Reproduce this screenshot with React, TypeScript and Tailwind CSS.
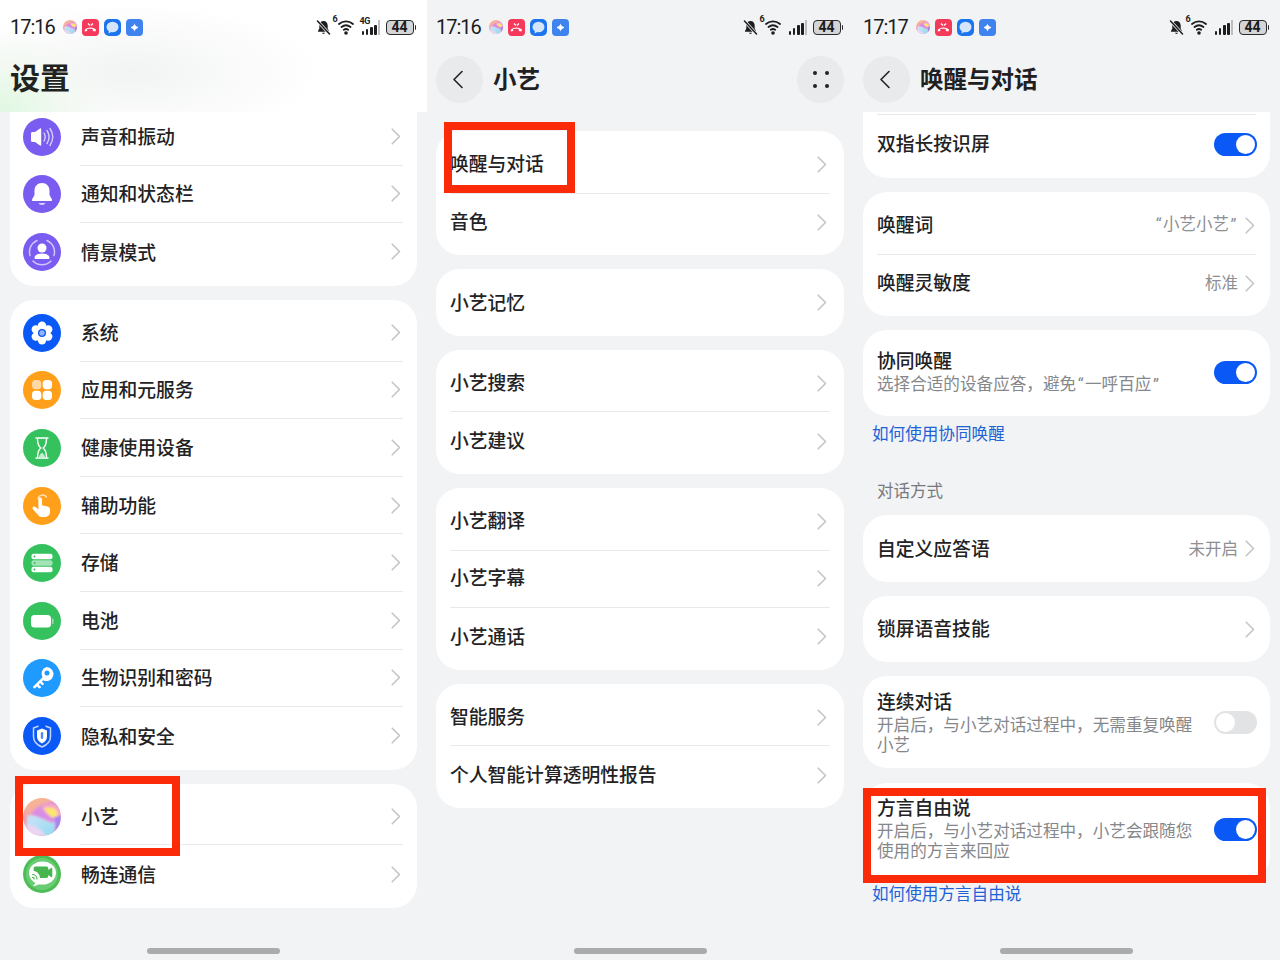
import type { ReactNode } from "react";

const CJK = "font-['Noto_Sans_CJK_SC','Noto_Sans',sans-serif]";

function Chevron() {
  return (
    <svg width="10" height="17" viewBox="0 0 10 17" fill="none" className="shrink-0">
      <path d="M1.200 1.200 8.500 8.500 1.200 15.800" stroke="#c3c5c8" strokeWidth="1.600" strokeLinecap="round" strokeLinejoin="round" />
    </svg>
  );
}

function Toggle({ on = true, className = "" }: { on?: boolean; className?: string }) {
  return (
    <div className={`flex h-[23px] w-[43px] shrink-0 items-center rounded-full px-[2px] ${on ? "justify-end bg-[#0a59f7]" : "justify-start bg-[#e2e3e5]"} ${className}`}>
      <div className="h-[19px] w-[19px] rounded-full bg-white" />
    </div>
  );
}

function Circle({ bg, children }: { bg: string; children: ReactNode }) {
  return (
    <svg width="38" height="38" viewBox="0 0 38 38" className="shrink-0">
      <circle cx="19" cy="19" r="19" fill={bg} />
      {children}
    </svg>
  );
}

const SoundIcon = (
  <Circle bg="#7a5cf0">
    <path d="M8 15.500c0-.8.6-1.500 1.500-1.500h2.500l5-3.500c.6-.4 1.200 0 1.200.6v15.800c0 .6-.6 1-1.200.6l-5-3.500H9.500c-.9 0-1.500-.7-1.500-1.500z" fill="#fff" />
    <path d="M21 15c1.500 2.500 1.500 5.500 0 8M24 12.500c2.600 4 2.600 9 0 13M27 10.500c3.400 5.200 3.400 11.800 0 17" stroke="#fff" strokeOpacity=".7" strokeWidth="1.400" fill="none" strokeLinecap="round" />
  </Circle>
);
const BellIcon = (
  <Circle bg="#7a5cf0">
    <path d="M19 8c-4.500 0-7.500 3.400-7.500 7.500v4.500L9 24.500c-.4.8.1 1.500 1 1.500h18c.9 0 1.400-.7 1-1.500L26.500 20v-4.500C26.500 11.400 23.500 8 19 8z" fill="#fff" />
    <path d="M15.500 28h7c-.6 1.300-2 2-3.500 2s-2.900-.7-3.500-2z" fill="#fff" fillOpacity=".75" />
  </Circle>
);
const SceneIcon = (
  <Circle bg="#7a5cf0">
    <path d="M7 22.500a12.500 12.500 0 0 1 7-15M24 7.500a12.500 12.500 0 0 1 7 15M28 28a12.500 12.500 0 0 1-18 0" stroke="#fff" strokeOpacity=".65" strokeWidth="1.500" fill="none" strokeLinecap="round" />
    <circle cx="19" cy="15" r="4.500" fill="#fff" />
    <path d="M11.500 25c0-3 3.400-4.500 7.500-4.500s7.500 1.500 7.500 4.500c0 .7-.5 1-1 1h-13c-.5 0-1-.3-1-1z" fill="#fff" />
  </Circle>
);
const GearIcon = (
  <Circle bg="#0a59f7">
    <g fill="#fff">
      <circle cx="19" cy="11.800" r="4.200" />
      <circle cx="25.200" cy="15.400" r="4.200" />
      <circle cx="25.200" cy="22.600" r="4.200" />
      <circle cx="19" cy="26.200" r="4.200" />
      <circle cx="12.800" cy="22.600" r="4.200" />
      <circle cx="12.800" cy="15.400" r="4.200" />
      <circle cx="19" cy="19" r="7" />
    </g>
    <circle cx="19" cy="19" r="4" fill="#0a59f7" />
    <circle cx="19" cy="19" r="2.700" fill="#8fb4fa" />
  </Circle>
);
const AppsIcon = (
  <Circle bg="#ff9f1a">
    <rect x="9" y="9" width="9.300" height="9.300" rx="3.500" fill="#fff" fillOpacity=".6" />
    <rect x="19.700" y="9" width="9.300" height="9.300" rx="3.500" fill="#fff" />
    <rect x="9" y="19.700" width="9.300" height="9.300" rx="3.500" fill="#fff" />
    <rect x="19.700" y="19.700" width="9.300" height="9.300" rx="3.500" fill="#fff" />
  </Circle>
);
const HourglassIcon = (
  <Circle bg="#35c25e">
    <path d="M13 9h12M13 29h12" stroke="#fff" strokeWidth="1.400" strokeLinecap="round" />
    <path d="M14.500 9.500c0 5 .8 7.500 3.300 9.500-2.500 2-3.300 4.500-3.300 9.500M23.500 9.500c0 5-.8 7.500-3.300 9.500 2.500 2 3.300 4.500 3.300 9.500" stroke="#fff" strokeWidth="1.400" fill="none" />
    <path d="M16 28c.5-2.300 1.700-3.500 3-4.200 1.300.7 2.500 1.900 3 4.200z" fill="#fff" fillOpacity=".7" />
  </Circle>
);
const HandIcon = (
  <Circle bg="#ff9f1a">
    <path d="M15 11.500a4.800 4.800 0 0 1 8.500-1.500" stroke="#fff" strokeOpacity=".7" strokeWidth="1.400" fill="none" strokeLinecap="round" />
    <path d="M17.200 10.500c1 0 1.800.8 1.800 1.800v6l5.500 1.100c1.500.3 2.500 1.500 2.500 3v2.600c0 3-2.400 5-5.400 5h-2.200c-2 0-3.400-.8-4.500-2.300l-5-5.400c-.7-.8-.5-1.900.3-2.500.7-.5 1.600-.4 2.300.2l2.900 2.500v-10.200c0-1 .8-1.800 1.800-1.800z" fill="#fff" />
  </Circle>
);
const StorageIcon = (
  <Circle bg="#35c25e">
    <rect x="8.500" y="9.800" width="21" height="5.400" rx="2" fill="#fff" />
    <rect x="8.500" y="16.300" width="21" height="5.400" rx="2" fill="#fff" fillOpacity=".55" />
    <rect x="8.500" y="22.800" width="21" height="5.400" rx="2" fill="#fff" />
    <circle cx="11.500" cy="12.500" r="1" fill="#35c25e" />
    <circle cx="11.500" cy="19" r="1" fill="#35c25e" />
    <circle cx="11.500" cy="25.500" r="1" fill="#35c25e" />
  </Circle>
);
const BatteryIcon = (
  <Circle bg="#35c25e">
    <rect x="8" y="13" width="20" height="12.500" rx="3.500" fill="#fff" />
    <rect x="29" y="16.500" width="1.500" height="5.500" rx=".7" fill="#fff" fillOpacity=".5" />
  </Circle>
);
const KeyIcon = (
  <Circle bg="#1f9bff">
    <path fillRule="evenodd" d="M23.500 8a7 7 0 1 1-3.300 13.200l-1.300 1.300 1.500 1.500c.5.500.5 1.300 0 1.800s-1.300.5-1.800 0l-1.500-1.500-1.300 1.300 1.700 1.700c.5.500.5 1.300 0 1.800s-1.300.5-1.800 0l-1.700-1.700-1.700 1.700c-.5.500-1.300.5-1.800 0s-.5-1.300 0-1.800l9-9A7 7 0 0 1 23.500 8zm.5 3.500a2.500 2.500 0 1 0 0 5 2.500 2.500 0 0 0 0-5z" fill="#fff" />
  </Circle>
);
const ShieldIcon = (
  <Circle bg="#0a59f7">
    <path d="M15 9.200 10.500 11v8.500c0 5 3.500 8.500 8.500 10.500 5-2 8.500-5.500 8.500-10.500V11L23 9.200" fill="none" stroke="#fff" strokeOpacity=".75" strokeWidth="1.500" strokeLinecap="round" />
    <path d="M14 13.500 19 11.500l5 2v6c0 3.400-2.200 5.700-5 7-2.800-1.300-5-3.600-5-7z" fill="#fff" />
    <rect x="17.800" y="15" width="2.400" height="7" rx="1.200" fill="#0a59f7" fillOpacity=".7" />
  </Circle>
);
function XiaoyiBall({ size, id }: { size: number; id: string }) {
  return (
    <svg width={size} height={size} viewBox="0 0 38 38" className="shrink-0">
      <defs>
        <clipPath id={id}><circle cx="19" cy="19" r="19" /></clipPath>
        <filter id={`${id}f`} x="-20%" y="-20%" width="140%" height="140%"><feGaussianBlur stdDeviation=".8" /></filter>
        <linearGradient id={`${id}a`} x1="0" y1="0" x2="0.4" y2="1">
          <stop offset="0" stopColor="#f8c07e" />
          <stop offset=".5" stopColor="#f3a2b4" />
          <stop offset="1" stopColor="#e9a9d8" />
        </linearGradient>
        <linearGradient id={`${id}b`} x1="0" y1="0" x2="1" y2="1">
          <stop offset="0" stopColor="#cfe2f8" />
          <stop offset="1" stopColor="#8fdcf0" />
        </linearGradient>
      </defs>
      <g clipPath={`url(#${id})`}>
        <rect width="38" height="38" fill={`url(#${id}a)`} />
        <g filter={`url(#${id}f)`}>
          <path d="M8 17C12 10 20 5 30 4l8 4v20L28 24C22 21 14 18 8 17z" fill="#d98ee6" />
          <path d="M18 9c4-3 10-4 15-2l5 5v10c-8 1-15-6-20-13z" fill="#f6a9c4" />
          <path d="M21 11c3-2 9-2 12 1 2 2 2 6 1 8-5 0-10-4-13-9z" fill="#fde56f" />
          <path d="M31 19c2 0 4-1 7-2v12l-7 6c2-5 2-11 0-16z" fill="#a484ee" />
          <path d="M5 17c8 0 15 4 21 7 2 1 4 1 5.500 0 .5 6-.5 11-3.500 14H8C3 32 3 24 5 17z" fill={`url(#${id}b)`} />
          <path d="M3 27c6-1 14 2 20 11H6z" fill="#e8d6f2" />
        </g>
      </g>
    </svg>
  );
}
const ChatIcon = (
  <Circle bg="#4dbd55">
    <circle cx="19" cy="19" r="16" fill="#6acc73" />
    <ellipse cx="19.500" cy="18" rx="13.500" ry="11.500" fill="#fff" />
    <path d="M12.500 26c0 2-1 4-3 5 3.500 0 7-1.500 8.500-4z" fill="#fff" />
    <path d="M14.500 11.500h9c1 0 1.800.8 1.800 1.800v1.700l2.800-2c.5-.3 1.200 0 1.200.6v7.800c0 .6-.7 1-1.200.6l-2.800-2v1.100c0 1-.8 1.800-1.800 1.800h-6.500c0-3.500-2.500-6.500-6.300-7v-2.600c0-1 .8-1.800 1.800-1.800z" fill="#47b650" />
    <path d="M9.500 19.500c2.500 0 4.500 2 4.500 4.500M9.500 22.300c1 0 1.700.7 1.700 1.700" stroke="#47b650" strokeWidth="1.200" fill="none" strokeLinecap="round" />
  </Circle>
);

function BellOff() {
  return (
    <svg width="15" height="15" viewBox="0 0 15 15" className="shrink-0">
      <path d="M7.500 1C5 1 3.300 3 3.300 5.500v3L2 11c-.2.400 0 .8.500.8h10c.5 0 .7-.4.500-.8l-1.300-2.500v-3C11.700 3 10 1 7.500 1z" fill="#1d1d1f" />
      <path d="M6 12.800h3c-.2.700-.8 1.200-1.500 1.200S6.200 13.500 6 12.800z" fill="#1d1d1f" />
      <path d="M1.500 1 13.500 14" stroke="#f1f3f5" strokeWidth="3" />
      <path d="M1.500 1 13.500 14" stroke="#1d1d1f" strokeWidth="1.500" strokeLinecap="round" />
    </svg>
  );
}

function WifiSix() {
  return (
    <div className="relative h-[16px] w-[20px] shrink-0">
      <svg width="20" height="16" viewBox="0 0 20 16" className="absolute left-0 top-0">
        <path d="M3 5C7.200 1.500 12.800 1.500 17 5M5.500 8c2.800-2.200 6.200-2.200 9 0M7.800 10.800c1.500-1 2.900-1 4.400 0" stroke="#1d1d1f" strokeWidth="1.900" fill="none" strokeLinecap="round" />
        <circle cx="10" cy="14" r="1.800" fill="#1d1d1f" />
      </svg>
      <span className="absolute -left-[3px] -top-[4px] font-['Roboto',sans-serif] text-[9px] font-bold leading-none text-[#1d1d1f]">6</span>
    </div>
  );
}

function Signal({ fourG = false }: { fourG?: boolean }) {
  const heights = fourG ? [4, 6, 8, 10] : [4, 7, 10, 12];
  return (
    <div className="relative flex h-[15px] w-[19px] shrink-0 items-end gap-[1.500px] pl-[1px]">
      {fourG ? <span className="absolute -left-[1px] -top-[3px] font-['Roboto',sans-serif] text-[9px] font-bold leading-none tracking-[-0.5px] text-[#1d1d1f]">4G</span> : null}
      {heights.map((h) => (
        <div key={h} className="w-[3px] rounded-[1px] bg-[#1d1d1f]" style={{ height: h }} />
      ))}
      <div className="h-[15px] w-[1.500px] bg-[#bcbec0]" />
    </div>
  );
}

function StatusBar({ time, fourG, pl = 10 }: { time: string; fourG?: boolean; pl?: number }) {
  return (
    <div className="flex h-[54px] items-center pr-[11px]" style={{ paddingLeft: pl }}>
      <span className="font-['Roboto',sans-serif] text-[20px] leading-none tracking-[-1px] text-[#1b1b1d]">{time}</span>
      <div className="ml-[8px] flex items-center gap-[5px]">
        <XiaoyiBall size={14} id={`s${time}${pl}`} />
        <svg width="17" height="17" viewBox="0 0 17 17" className="shrink-0">
          <rect width="17" height="17" rx="4" fill="#f5395a" />
          <path d="M3 10.500c3-2.800 8-2.800 11 0l-.6 2-2.600-.6V10c-1.700-.5-3.900-.5-5.600 0v1.900l-2.600.6z" fill="#fff" />
          <path d="M6 4.500l2 2M11 4.500l-2 2" stroke="#fff" strokeWidth="1.200" />
        </svg>
        <svg width="17" height="17" viewBox="0 0 17 17" className="shrink-0">
          <rect width="17" height="17" rx="5" fill="#1b74f0" />
          <ellipse cx="8.500" cy="8" rx="6" ry="5.300" fill="#d5e6fb" />
          <path d="M5 11.500 4.500 14.500 8 12.500z" fill="#d5e6fb" />
        </svg>
        <svg width="17" height="17" viewBox="0 0 17 17" className="shrink-0">
          <rect width="17" height="17" rx="4" fill="#3e83ee" />
          <path d="M8.500 4.500c.5 2 1.500 3 3.500 3.500v1c-2 .5-3 1.500-3.500 3.500-.5-2-1.500-3-3.500-3.500V8c2-.5 3-1.500 3.500-3.500z" fill="#fff" />
        </svg>
      </div>
      <div className="ml-auto flex items-center gap-[5px]">
        <BellOff />
        <WifiSix />
        <Signal fourG={fourG} />
        <div className="ml-[1px] flex items-center gap-[1px]">
          <div className="flex h-[15px] w-[28px] items-center justify-center rounded-[4px] border-[1.500px] border-[#2a2a2c] bg-[#d4d5d7]">
            <span className="font-['Roboto',sans-serif] text-[14px] font-bold leading-none text-[#1b1b1d]">44</span>
          </div>
          <div className="h-[5px] w-[1.500px] rounded-r bg-[#2a2a2c]" />
        </div>
      </div>
    </div>
  );
}

function NavBar({ title, dots }: { title: string; dots?: boolean }) {
  return (
    <div className="flex h-[50px] items-center pl-[9px] pr-[10px]">
      <div className="flex h-[47px] w-[47px] items-center justify-center rounded-full bg-[#e8eaec]">
        <svg width="12" height="19" viewBox="0 0 12 19" fill="none" className="-ml-[3px]">
          <path d="M10 1.500 2 9.500 10 17.500" stroke="#222" strokeWidth="1.600" strokeLinecap="round" strokeLinejoin="round" />
        </svg>
      </div>
      <span className="ml-[10px] text-[23.500px] font-bold leading-none text-[#202022]">{title}</span>
      {dots ? (
        <div className="ml-auto grid h-[47px] w-[47px] grid-cols-2 place-content-center gap-x-[9px] gap-y-[9px] rounded-full bg-[#e8eaec] px-[15.500px]">
          <div className="h-[4px] w-[4px] rounded-full bg-[#222]" />
          <div className="h-[4px] w-[4px] rounded-full bg-[#222]" />
          <div className="h-[4px] w-[4px] rounded-full bg-[#222]" />
          <div className="h-[4px] w-[4px] rounded-full bg-[#222]" />
        </div>
      ) : null}
    </div>
  );
}

function IconRow({ icon, label, last }: { icon: ReactNode; label: string; last?: boolean }) {
  return (
    <div className="flex h-[57.600px] items-center pl-[13px] pr-[14px]">
      {icon}
      <div className={`ml-[19px] flex h-full flex-1 items-center pl-[1px] pr-[2px] ${last ? "" : "border-b border-[#e7e9eb]"}`}>
        <span className="flex-1 text-[18.800px] font-medium leading-none text-[#222224]">{label}</span>
        <Chevron />
      </div>
    </div>
  );
}

function TextRow({ label, value, last, edge = "pr-[3px]" }: { label: string; value?: ReactNode; last?: boolean; edge?: string }) {
  return (
    <div className="px-[14px]">
      <div className={`flex h-[57.600px] items-center ${edge} ${last ? "" : "border-b border-[#e7e9eb]"}`}>
        <span className="mb-[2px] flex-1 text-[18.800px] font-medium leading-none text-[#222224]">{label}</span>
        {value ? <span className="mb-[2px] mr-[7px] text-[16.500px] leading-none text-[#8d8f92]">{value}</span> : null}
        <Chevron />
      </div>
    </div>
  );
}

function Card({ children, className = "" }: { children: ReactNode; className?: string }) {
  return <div className={`rounded-[24px] bg-white pb-[4px] pt-[5px] ${className}`}>{children}</div>;
}

function IconCard({ children }: { children: ReactNode }) {
  return <div className="mt-[14px] rounded-[24px] bg-white pb-[5px] pt-[4px]">{children}</div>;
}

function Quote({ mark }: { mark: string }) {
  return <span className="px-[1.500px] font-['Roboto',sans-serif]">{mark}</span>;
}

function TwoLine({ title, sub, on, className, toggleClass }: { title: string; sub: ReactNode[]; on: boolean; className: string; toggleClass?: string }) {
  return (
    <div className={`flex items-center rounded-[24px] bg-white pl-[14px] pr-[13px] ${className}`}>
      <div className="w-[322px]">
        <div className="text-[18.800px] font-medium leading-[24px] text-[#222224]">{title}</div>
        <div className="mt-[1px] text-[16.600px] leading-[20px] text-[#85878a]">
          {sub.map((s, i) => (
            <div key={i}>{s}</div>
          ))}
        </div>
      </div>
      <Toggle on={on} className={`ml-auto ${toggleClass ?? ""}`} />
    </div>
  );
}

function HomeBar({ className = "left-[147px]" }: { className?: string }) {
  return <div className={`absolute bottom-[6px] h-[6px] w-[133px] rounded-full bg-[#a9abad] ${className}`} />;
}

function RedBox({ className }: { className: string }) {
  return <div className={`absolute border-[8px] border-[#fb2a08] ${className}`} />;
}

function SettingsColumn() {
  return (
    <div className="relative h-[960px] w-[427px] overflow-hidden">
      <div className="h-[112px] bg-white bg-[radial-gradient(ellipse_110px_80px_at_0px_112px,#dff8e2_0%,#f3f9f2_60%,transparent_100%),radial-gradient(ellipse_190px_70px_at_130px_72px,#f2f3f3_0%,transparent_100%)]">
        <StatusBar time="17:16" fourG />
        <div className="-mt-[3px] flex h-[50px] items-center pl-[10px]">
          <span className="text-[30px] font-bold leading-none text-[#1f2421]">设置</span>
        </div>
      </div>
      <div className="h-[848px] overflow-hidden px-[10px]">
        <div className="-mt-[24px] rounded-[24px] bg-white pb-[5.200px] pt-[20px]">
          <IconRow icon={SoundIcon} label="声音和振动" />
          <IconRow icon={BellIcon} label="通知和状态栏" />
          <IconRow icon={SceneIcon} label="情景模式" last />
        </div>
        <IconCard>
          <IconRow icon={GearIcon} label="系统" />
          <IconRow icon={AppsIcon} label="应用和元服务" />
          <IconRow icon={HourglassIcon} label="健康使用设备" />
          <IconRow icon={HandIcon} label="辅助功能" />
          <IconRow icon={StorageIcon} label="存储" />
          <IconRow icon={BatteryIcon} label="电池" />
          <IconRow icon={KeyIcon} label="生物识别和密码" />
          <IconRow icon={ShieldIcon} label="隐私和安全" last />
        </IconCard>
        <IconCard>
          <IconRow icon={<XiaoyiBall size={38} id="xy" />} label="小艺" />
          <IconRow icon={ChatIcon} label="畅连通信" last />
        </IconCard>
      </div>
      <RedBox className="left-[15px] top-[776px] h-[80px] w-[165px]" />
      <HomeBar />
    </div>
  );
}

function XiaoyiColumn() {
  return (
    <div className="relative h-[960px] w-[427px] overflow-hidden">
      <StatusBar time="17:16" pl={9} />
      <NavBar title="小艺" dots />
      <div className="mt-[27px] flex flex-col gap-[14px] pl-[9px] pr-[10px]">
        <Card>
          <TextRow label="唤醒与对话" />
          <TextRow label="音色" last />
        </Card>
        <Card>
          <TextRow label="小艺记忆" last />
        </Card>
        <Card>
          <TextRow label="小艺搜索" />
          <TextRow label="小艺建议" last />
        </Card>
        <Card>
          <TextRow label="小艺翻译" />
          <TextRow label="小艺字幕" />
          <TextRow label="小艺通话" last />
        </Card>
        <Card>
          <TextRow label="智能服务" />
          <TextRow label="个人智能计算透明性报告" last />
        </Card>
      </div>
      <RedBox className="left-[17px] top-[122px] h-[71px] w-[131px]" />
      <HomeBar />
    </div>
  );
}

function WakeColumn() {
  return (
    <div className="relative h-[960px] w-[426px] overflow-hidden">
      <StatusBar time="17:17" pl={9} />
      <NavBar title="唤醒与对话" />
      <div className="mt-[8px] h-[848px] overflow-hidden pl-[9px] pr-[10px]">
        <div className="-mt-[24px] rounded-[24px] bg-white pb-[5px]">
          <div className="mx-[14px] h-[27px] border-b border-[#e7e9eb]" />
          <div className="flex h-[58px] items-center pl-[14px] pr-[13px]">
            <span className="-mt-[2px] flex-1 text-[18.800px] font-medium leading-none text-[#222224]">双指长按识屏</span>
            <Toggle />
          </div>
        </div>
        <Card className="mt-[14px]">
          <TextRow edge="pr-[1px]" label="唤醒词" value={<><Quote mark="“" />小艺小艺<Quote mark="”" /></>} />
          <TextRow edge="pr-[1px]" label="唤醒灵敏度" value="标准" last />
        </Card>
        <TwoLine className="mt-[14px] h-[86px] pb-[4px]" title="协同唤醒" sub={[<>选择合适的设备应答，避免<Quote mark="“" />一呼百应<Quote mark="”" /></>]} on toggleClass="mt-[2px]" />
        <div className="ml-[9px] mt-[6px] text-[16.600px] leading-[22px] text-[#1e62d6]">如何使用协同唤醒</div>
        <div className="ml-[14px] mt-[35px] text-[16.500px] leading-[22px] text-[#77797c]">对话方式</div>
        <Card className="mt-[14px]">
          <TextRow edge="pr-[1px]" label="自定义应答语" value="未开启" last />
        </Card>
        <Card className="mt-[14px]">
          <TextRow edge="pr-[1px]" label="锁屏语音技能" last />
        </Card>
        <TwoLine className="mt-[14px] h-[92px] pb-[2px]" title="连续对话" sub={["开启后，与小艺对话过程中，无需重复唤醒", "小艺"]} on={false} toggleClass="mt-[2px]" />
        <TwoLine className="mt-[15px] h-[97px] pb-[8px]" title="方言自由说" sub={["开启后，与小艺对话过程中，小艺会跟随您", "使用的方言来回应"]} on toggleClass="mt-[4px]" />
        <div className="ml-[9px] mt-[2px] text-[16.600px] leading-[22px] text-[#1e62d6]">如何使用方言自由说</div>
      </div>
      <RedBox className="left-[9px] top-[788px] h-[95px] w-[403px]" />
      <HomeBar className="left-[146px]" />
    </div>
  );
}

export default function App() {
  return (
    <div className={`flex h-[960px] w-[1280px] overflow-hidden bg-[#f1f3f5] ${CJK}`}>
      <SettingsColumn />
      <XiaoyiColumn />
      <WakeColumn />
    </div>
  );
}
